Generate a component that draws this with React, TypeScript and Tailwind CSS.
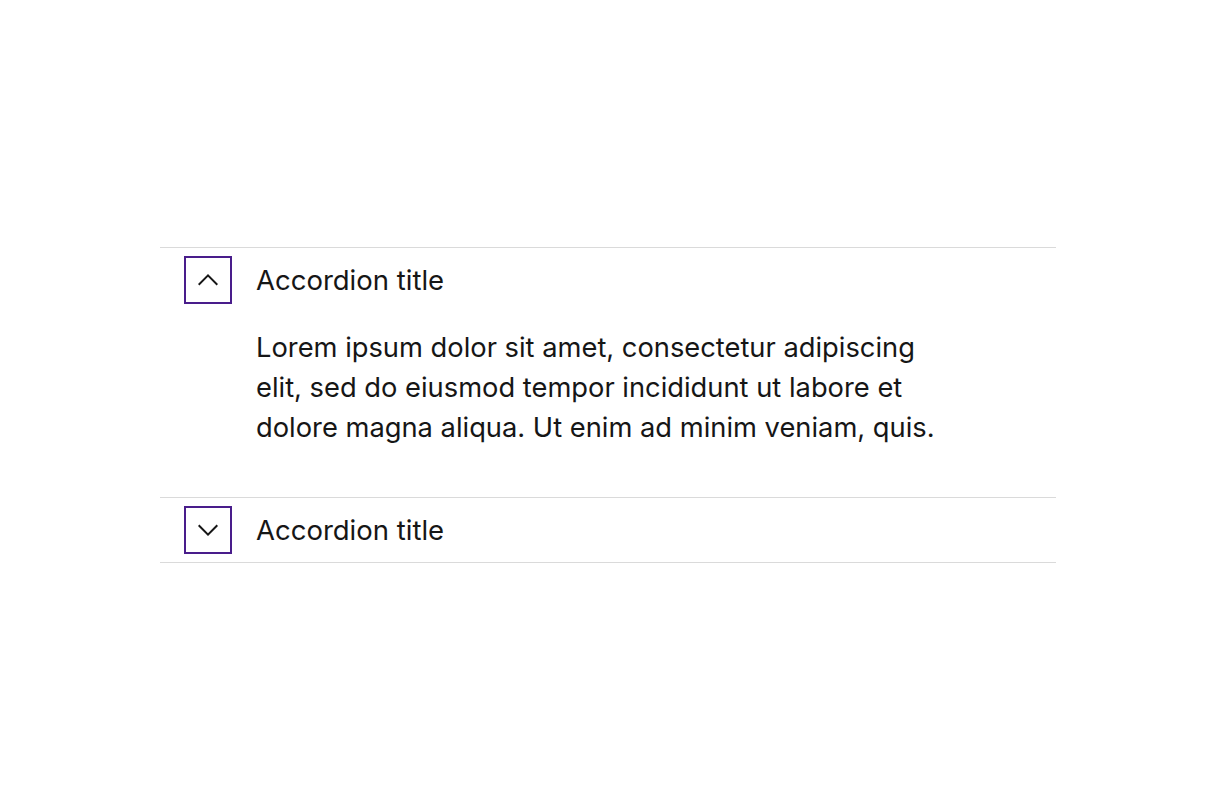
import { useState } from "react"

const items = [
    {
        title: "Accordion title",
        body: "Lorem ipsum dolor sit amet, consectetur adipiscing elit, sed do eiusmod tempor incididunt ut labore et dolore magna aliqua. Ut enim ad minim veniam, quis.",
    },
    {
        title: "Accordion title",
        body: "Lorem ipsum dolor sit amet, consectetur adipiscing elit, sed do eiusmod tempor incididunt ut labore et dolore magna aliqua. Ut enim ad minim veniam, quis.",
    },
]

function Chevron({ open }: { open: boolean }) {
    return (
        <svg width="32" height="32" viewBox="0 0 16 16" fill="#161616" aria-hidden="true">
            {open ? (
                <path d="M8 5L13 10 12.3 10.7 8 6.4 3.7 10.7 3 10z" />
            ) : (
                <path d="M8 11L3 6 3.7 5.3 8 9.6 12.3 5.3 13 6z" />
            )}
        </svg>
    )
}

export default function App() {
    const [open, setOpen] = useState<number[]>([0])

    const toggle = (i: number) =>
        setOpen((o) => (o.includes(i) ? o.filter((x) => x !== i) : [...o, i]))

    return (
        <div
            className="min-h-[810px] bg-white pt-[247px] px-[160px] text-[#161616]"
            style={{ fontFamily: "Inter, 'Noto Sans', sans-serif" }}
        >
            <ul className="w-[896px] border-b border-[#dadada]">
                {items.map((item, i) => {
                    const isOpen = open.includes(i)
                    return (
                        <li key={i} className="border-t border-[#dadada]">
                            <button
                                onClick={() => toggle(i)}
                                className="flex w-full items-center gap-6 py-2 pl-6 text-left"
                            >
                                <span className="flex h-12 w-12 items-center justify-center border-2 border-[#491d8b]">
                                    <Chevron open={isOpen} />
                                </span>
                                <span className="text-[27.5px] leading-10">{item.title}</span>
                            </button>
                            {isOpen && (
                                <div className="pl-24 pt-4 pb-[49px]">
                                    <p className="max-w-[690px] text-[27.3px] leading-10">{item.body}</p>
                                </div>
                            )}
                        </li>
                    )
                })}
            </ul>
        </div>
    )
}
